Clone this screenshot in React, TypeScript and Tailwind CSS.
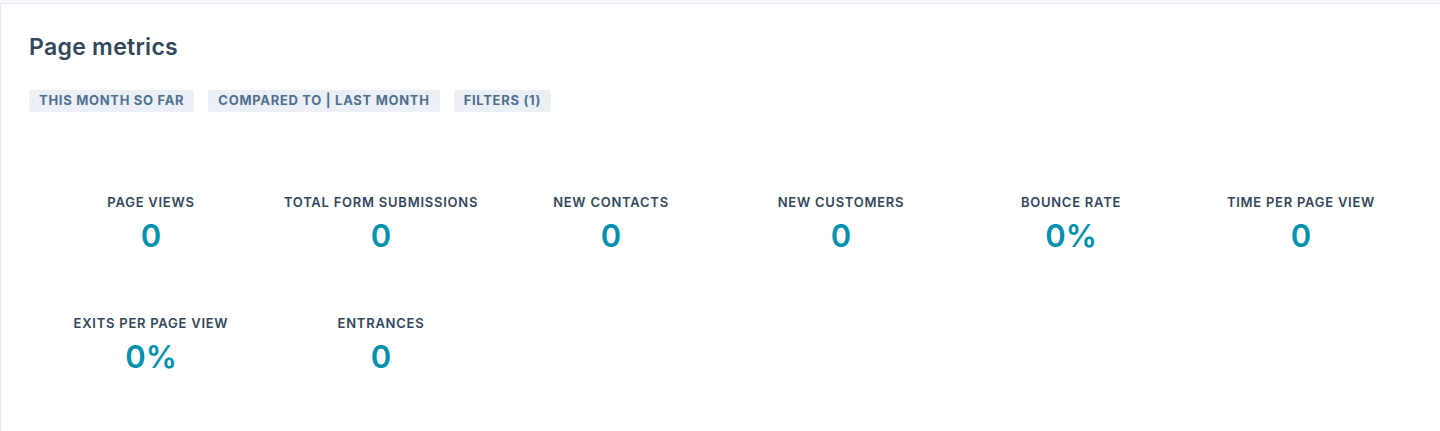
import React from "react";

type Metric = {
  label: string;
  value: string;
};

const metrics: Metric[] = [
  { label: "Page views", value: "0" },
  { label: "Total form submissions", value: "0" },
  { label: "New contacts", value: "0" },
  { label: "New customers", value: "0" },
  { label: "Bounce rate", value: "0%" },
  { label: "Time per page view", value: "0" },
  { label: "Exits per page view", value: "0%" },
  { label: "Entrances", value: "0" },
];

const filters = ["This month so far", "Compared to | Last month", "Filters (1)"];

function FilterChip({ text }: { text: string }) {
  return (
    <span className="h-[22px] px-[10px] flex items-center rounded-[3px] bg-[#eaf0f6] text-[#516f90] text-[13px] font-bold uppercase tracking-[0.7px]">
      {text}
    </span>
  );
}

function MetricTile({ metric }: { metric: Metric }) {
  return (
    <div className="flex flex-col items-center h-[121px]">
      <div className="text-[13px] leading-[16px] font-semibold uppercase text-[#33475b] tracking-[0.75px]">
        {metric.label}
      </div>
      <div className="mt-[8px] text-[31px] leading-[36px] font-semibold text-[#0091ae]">{metric.value}</div>
    </div>
  );
}

export default function App() {
  return (
    <div className="w-[1440px] h-[431px] bg-[#f5f8fa] pt-[3px] font-['Inter',sans-serif]">
      <div className="h-full bg-white border-l border-t border-[#e5eaf0] rounded-tl-[3px] pl-[28px] pt-[28px]">
        <h2 className="text-[23px] leading-[30px] font-semibold text-[#33475b] tracking-[0.3px]">Page metrics</h2>
        <div className="mt-[28px] flex gap-[14px]">
          {filters.map((f) => (
            <FilterChip key={f} text={f} />
          ))}
        </div>
        <div className="mt-[82px] ml-[7px] grid grid-cols-[repeat(6,230px)]">
          {metrics.map((m) => (
            <MetricTile key={m.label} metric={m} />
          ))}
        </div>
      </div>
    </div>
  );
}
